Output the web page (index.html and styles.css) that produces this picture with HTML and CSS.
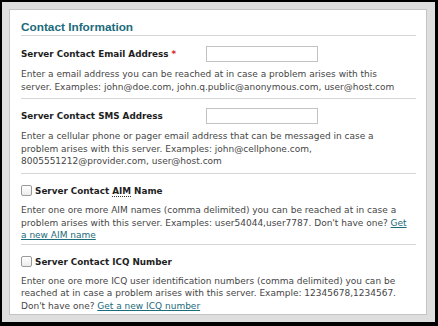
FILE: index.html
```html
<!DOCTYPE html>
<html lang="en">
<head>
    <meta charset="UTF-8">
    <title>Contact Information</title>
    <link rel="stylesheet" href="styles.css">
</head>
<body>
    <div class="frame">
        <div class="panel">
            <h2 class="panel-title">Contact Information</h2>

            <div class="field">
                <div class="field-row">
                    <label class="field-label" for="email">Server Contact Email Address <span class="required">*</span></label>
                    <input class="field-input" type="text" id="email">
                </div>
                <p class="field-help">Enter a email address you can be reached at in case a problem arises with this server. Examples: john@doe.com, john.q.public@anonymous.com, user@host.com</p>
            </div>

            <div class="field">
                <div class="field-row">
                    <label class="field-label" for="sms">Server Contact SMS Address</label>
                    <input class="field-input" type="text" id="sms">
                </div>
                <p class="field-help">Enter a cellular phone or pager email address that can be messaged in case a problem arises with this server. Examples: john@cellphone.com, 8005551212@provider.com, user@host.com</p>
            </div>

            <div class="field field-check">
                <div class="field-row check-row">
                    <label class="field-label"><span class="checkbox"></span> Server Contact <abbr title="AOL Instant Messenger">AIM</abbr> Name</label>
                </div>
                <p class="field-help">Enter one ore more AIM names (comma delimited) you can be reached at in case a problem arises with this server. Examples: user54044,user7787. Don't have one? <a href="#">Get a new AIM name</a></p>
            </div>

            <div class="field field-check">
                <div class="field-row check-row">
                    <label class="field-label"><span class="checkbox"></span> Server Contact ICQ Number</label>
                </div>
                <p class="field-help">Enter one ore more ICQ user identification numbers (comma delimited) you can be reached at in case a problem arises with this server. Example: 12345678,1234567. Don't have one? <a href="#">Get a new ICQ number</a></p>
            </div>
        </div>
    </div>
</body>
</html>
```

FILE: styles.css
```css
:root {
    --teal: #1b6b7b;
    --text: #464646;
    --label: #1e1e1e;
    --rule: #d6d6d6;
}

body {
    margin: 0;
    padding: 2px 3px 4px 2px;
    background: #000;
    font-family: 'DejaVu Sans', Verdana, sans-serif;
}

.frame {
    background: #dedede;
    padding: 7px 8px 7px 7px;
    height: 320px;
    box-sizing: border-box;
}

.panel {
    background: #fff;
    border: 1px solid #c4c4c4;
    padding: 10px 10px 0 11px;
    height: 100%;
    box-sizing: border-box;
    overflow: hidden;
}

/* title */
.panel-title {
    margin: 0;
    padding-bottom: 1px;
    border-bottom: 1px solid var(--rule);
    font-family: 'Liberation Sans', Arial, sans-serif;
    font-size: 11.8px;
    font-weight: bold;
    color: var(--teal);
}

/* fields */
.field {
    padding: 9px 0 5px;
    border-bottom: 1px solid var(--rule);
}

.field:first-of-type {
    padding-top: 10px;
}

.field-check {
    padding-bottom: 2px;
}

.field:last-child {
    border-bottom: none;
}

.field-row {
    display: flex;
    align-items: center;
    height: 16px;
}

.check-row {
    height: 15px;
}

.field-label {
    width: 185px;
    font-size: 8.8px;
    font-weight: bold;
    color: var(--label);
}

.check-row .field-label {
    width: auto;
}

.required {
    color: #d81e1e;
}

.field-input {
    width: 112px;
    height: 16px;
    box-sizing: border-box;
    border: 1px solid #c2c2c2;
    margin: 0;
    padding: 0;
}

.checkbox {
    display: inline-block;
    vertical-align: -2px;
    width: 9px;
    height: 9px;
    border: 1px solid #9a9a9a;
    border-radius: 2px;
    background: linear-gradient(#fff, #ececec);
}

abbr {
    text-decoration: none;
    border-bottom: 1px dotted #333;
}

.field-help {
    margin: 6px 0 0;
    padding-right: 8px;
    font-size: 9px;
    line-height: 12.6px;
    color: var(--text);
}

.field-help a {
    color: var(--teal);
}
```
